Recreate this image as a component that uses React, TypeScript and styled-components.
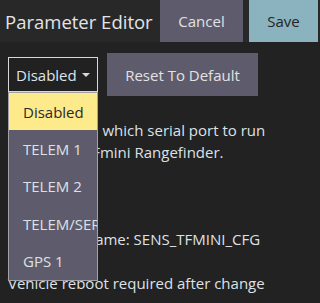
import { useState } from 'react';
import styled, { createGlobalStyle } from 'styled-components';

const GlobalStyle = createGlobalStyle`
  html, body {
    margin: 0;
    padding: 0;
    background: #222222;
    font-family: "Open Sans", "DejaVu Sans", sans-serif;
  }
`;

const options = ['Disabled', 'TELEM 1', 'TELEM 2', 'TELEM/SERIAL 4', 'GPS 1'];

const Page = styled.div`
  position: relative;
  width: 320px;
  height: 303px;
  overflow: hidden;
  background: #222222;
  color: #dedede;
`;

const Header = styled.div`
  display: flex;
  align-items: stretch;
  height: 42px;
  background: #282828;
  padding-right: 2px;
  gap: 6px;
`;

const Title = styled.div`
  flex: 1;
  display: flex;
  align-items: center;
  padding-left: 5px;
  font-size: 18.5px;
  color: #e2e4e8;
  white-space: nowrap;
`;

const Button = styled.button<{ $primary?: boolean; $width: number; $height?: number }>`
  width: ${p => p.$width}px;
  height: ${p => (p.$height ? `${p.$height}px` : 'auto')};
  border: none;
  margin: 0;
  padding: 0;
  background: ${p => (p.$primary ? '#8bb3bf' : '#5e5c6c')};
  color: ${p => (p.$primary ? '#242424' : '#e2e2e2')};
  font-family: inherit;
  font-size: 15px;
`;

const Body = styled.div`
  padding: 11px 8px 0 8px;
`;

const ControlRow = styled.div`
  display: flex;
  align-items: center;
  gap: 9px;
`;

const Combo = styled.div`
  box-sizing: border-box;
  width: 90px;
  height: 35px;
  border: 1px solid #d8d8d8;
  background: #212121;
  display: flex;
  align-items: center;
  justify-content: space-between;
  padding: 0 7px;
  font-size: 15px;
  color: #dde4ec;
`;

const Arrow = styled.span`
  width: 0;
  height: 0;
  border-left: 4px solid transparent;
  border-right: 4px solid transparent;
  border-top: 4px solid #d8d8d8;
  margin-top: 1px;
`;

const Text = styled.div<{ $gap: number }>`
  margin-top: ${p => p.$gap}px;
  font-size: 15px;
  line-height: 22px;
  color: #dde1e6;
`;

const Popup = styled.div`
  position: absolute;
  left: 8px;
  top: 92px;
  box-sizing: border-box;
  width: 90px;
  height: 189px;
  border: 1px solid #a2a2a6;
  background: #5e5c6c;
  overflow: hidden;
`;

const Item = styled.div<{ $active: boolean }>`
  height: 37.4px;
  display: flex;
  align-items: center;
  padding-left: 14px;
  white-space: nowrap;
  font-size: 15px;
  background: ${p => (p.$active ? '#fdea8a' : 'transparent')};
  color: ${p => (p.$active ? '#2a2a2a' : '#dde1e6')};
`;

export default function App() {
  const [selected, setSelected] = useState(0);

  return (
    <Page>
      <GlobalStyle />
      <Header>
        <Title>Parameter Editor</Title>
        <Button $width={83}>Cancel</Button>
        <Button $width={69} $primary>Save</Button>
      </Header>
      <Body>
        <ControlRow>
          <Combo>
            {options[selected]}
            <Arrow />
          </Combo>
          <Button $width={151} $height={43}>Reset To Default</Button>
        </ControlRow>
        <Text $gap={23}>
          Configure on which serial port to run Benewake TFmini Rangefinder.
        </Text>
        <Text $gap={65}>Parameter name: SENS_TFMINI_CFG</Text>
        <Text $gap={22}>Vehicle reboot required after change</Text>
      </Body>
      <Popup>
        {options.map((o, i) => (
          <Item key={o} $active={i === selected} onClick={() => setSelected(i)}>
            {o}
          </Item>
        ))}
      </Popup>
    </Page>
  );
}
